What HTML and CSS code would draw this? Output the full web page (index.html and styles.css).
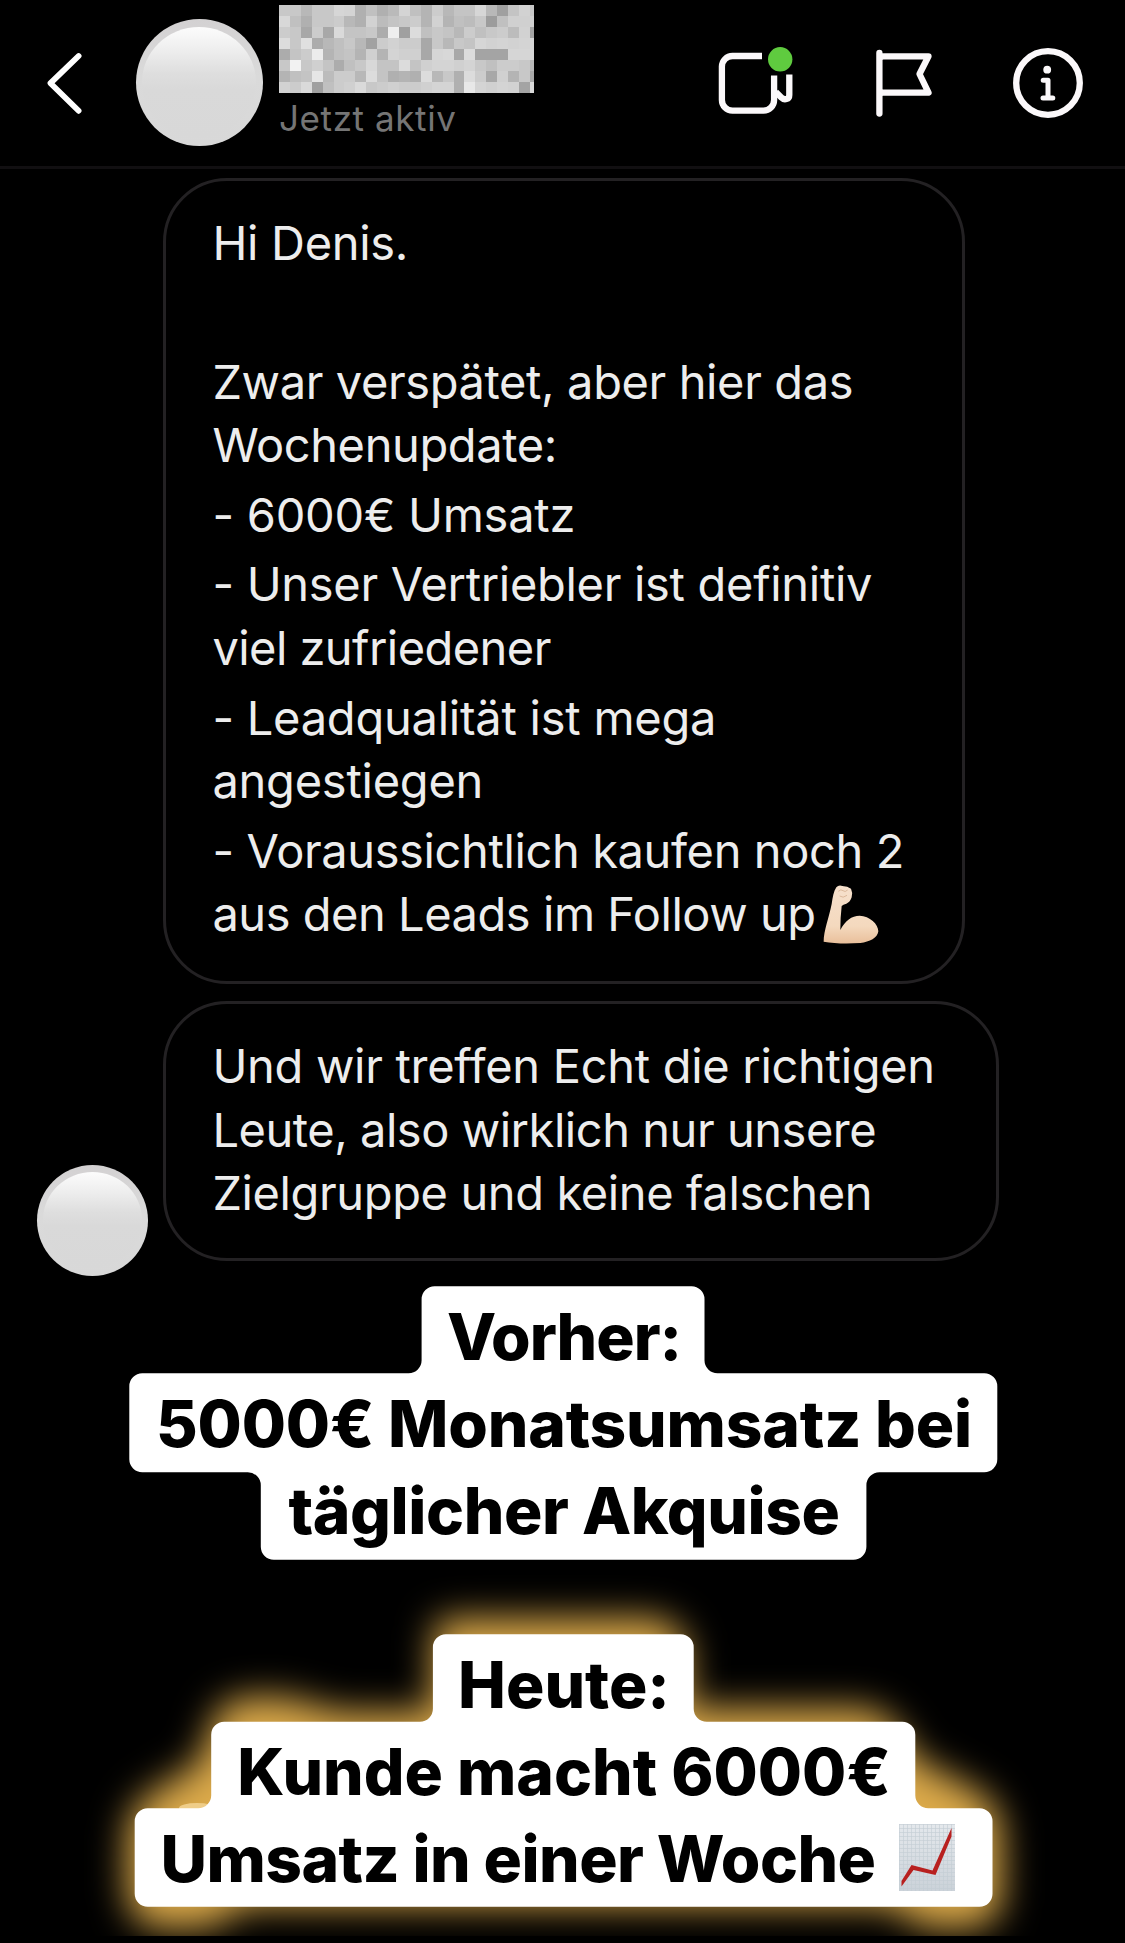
FILE: index.html
```html
<!DOCTYPE html>
<html lang="de">
<head>
<meta charset="utf-8">
<title>Chat</title>
<link rel="stylesheet" href="styles.css">
</head>
<body>
<header class="topbar">
  <svg class="back" viewBox="45 48 40 70" aria-hidden="true"><path d="M78.600 56 50.500 83.200l28.100 27.600"/></svg>
  <div class="avatar avatar-lg"></div>
  <div class="contact">
    <div class="mosaic" id="mosaic"></div>
    <div class="status">Jetzt aktiv</div>
  </div>
  <nav class="actions">
    <svg class="icon" width="90" height="80" viewBox="710 43 90 80" aria-hidden="true">
      <path d="M761 56H731.500a10.600 10.600 0 0 0-10.600 10.600V100a10.600 10.600 0 0 0 10.600 10.600H762.500A10.600 10.600 0 0 0 773.100 100V75.500"/>
      <path d="M788.300 74.500V95c0 4.500-5 5.500-8 2.500l-5.500-5.500"/>
      <circle class="online" cx="779.200" cy="59.300" r="12.200"/>
    </svg>
    <svg class="icon" width="70" height="80" viewBox="870 43 70 80" aria-hidden="true">
      <path class="round" d="M878.400 53V113.500M878.400 60q0-3.700 4-3.700H927.500L918.500 74 927.500 92.700H882q-3.600 0-3.600 4"/>
    </svg>
    <svg class="icon" width="74" height="80" viewBox="1010 43 74 80" aria-hidden="true">
      <circle cx="1047" cy="83" r="31.800"/>
      <circle class="solid" cx="1046.200" cy="69.700" r="3.900"/>
      <path class="stem" d="M1042.200 80.200H1047V98M1042 98h9.800"/>
    </svg>
  </nav>
</header>

<main class="thread">
  <article class="bubble bubble-update">
    <p><span class="l-hi">Hi Denis.</span></p>
    <p>&nbsp;</p>
    <p><span>Zwar verspätet, aber hier das</span><span>Wochenupdate:</span></p>
    <p><span class="l-sales">- 6000€ Umsatz</span></p>
    <p><span class="l-group">- Unser Vertriebler ist definitiv</span><span class="l-viel">viel zufriedener</span></p>
    <p><span class="l-sales">- Leadqualität ist mega</span><span class="l-sales">angestiegen</span></p>
    <p><span>- Voraussichtlich kaufen noch 2</span><span class="l-tight">aus den Leads im Follow up<svg class="arm" viewBox="66 40 168 180" role="img" aria-label="Bizeps">
      <defs><linearGradient id="skin" x1="0" y1="0" x2="0" y2="1"><stop offset="0" stop-color="#f6e0cc"/><stop offset=".7" stop-color="#f4d9be"/><stop offset="1" stop-color="#e9bf9b"/></linearGradient></defs>
      <path fill="url(#skin)" d="M68 213C68 180 84 140 92 100C95 80 98 62 106 50Q113 42 124 46Q140 46 150 54Q156 66 152 80Q148 94 136 99Q126 101 122 106Q118 140 118 178C132 150 152 135 176 135C206 136 232 160 232 182C230 202 206 214 178 217C140 219 100 219 68 213Z"/>
      <path fill="none" stroke="#dcb99c" stroke-width="3" d="M112 62q8-8 14-2t14-2M116 76q10 8 22-2"/>
    </svg></span></p>
  </article>
  <div class="row">
    <div class="avatar avatar-sm"></div>
    <article class="bubble bubble-group">
      <p><span class="l-group">Und wir treffen Echt die richtigen</span><span class="l-tight">Leute, also wirklich nur unsere</span><span>Zielgruppe und keine falschen</span></p>
    </article>
  </div>
</main>

<section class="label before">
  <svg class="plate" viewBox="0 1286 1125 274" aria-hidden="true">
    <path fill="#fff" d="M434.600 1286.300H691.500a13 13 0 0 1 13 13V1360.300a13 13 0 0 0 13 13H984.300a13 13 0 0 1 13 13V1459.300a13 13 0 0 1-13 13H879.400a13 13 0 0 0-13 13V1546.700a13 13 0 0 1-13 13H273.800a13 13 0 0 1-13-13V1485.300a13 13 0 0 0-13-13H142.300a13 13 0 0 1-13-13V1386.300a13 13 0 0 1 13-13H408.600a13 13 0 0 0 13-13V1299.300a13 13 0 0 1 13-13Z"/>
  </svg>
  <div class="lines">
    <span class="t-vorher">Vorher:</span>
    <span class="t-month">5000€ Monatsumsatz bei</span>
    <span class="t-daily">täglicher Akquise</span>
  </div>
</section>

<section class="label today">
  <svg class="plate" viewBox="0 1560 1125 376" aria-hidden="true">
    <defs><filter id="glow" filterUnits="userSpaceOnUse" x="0" y="1480" width="1125" height="540" color-interpolation-filters="sRGB"><feGaussianBlur stdDeviation="18"/></filter></defs>
    <path fill="#dcaa4a" filter="url(#glow)" d="M434 1634Q436 1620 450 1618H655Q680 1624 688 1650V1708H865Q895 1714 914 1758L975 1790Q1002 1804 1002 1840V1900Q996 1926 970 1928H925L890 1906H245L210 1928H155Q128 1920 127 1890V1835Q130 1804 156 1790L200 1762 212 1725Q220 1700 246 1697H285L340 1712H432Z"/>
    <ellipse cx="197" cy="1808" rx="18" ry="5" fill="#efcd88"/>
    <path fill="#fff" d="M445.900 1634.300H680.700a13 13 0 0 1 13 13V1708.700a13 13 0 0 0 13 13H902.300a13 13 0 0 1 13 13V1795.300a13 13 0 0 0 13 13H979.500a13 13 0 0 1 13 13V1893.700a13 13 0 0 1-13 13H147.700a13 13 0 0 1-13-13V1821.300a13 13 0 0 1 13-13H198.200a13 13 0 0 0 13-13V1734.700a13 13 0 0 1 13-13H419.900a13 13 0 0 0 13-13V1647.300a13 13 0 0 1 13-13Z"/>
  </svg>
  <div class="lines">
    <span>Heute:</span>
    <span>Kunde macht 6000€</span>
    <span class="t-week">Umsatz in einer Woche<svg class="chart" viewBox="0 0 56 67" role="img" aria-label="Steigende Kurve">
      <defs>
        <linearGradient id="paper" x1="0" y1="0" x2="0" y2="1"><stop offset="0" stop-color="#e4e8ec"/><stop offset="1" stop-color="#cbd2d9"/></linearGradient>
        <pattern id="grid" width="4" height="4" patternUnits="userSpaceOnUse"><path d="M0 .5H4M.5 0V4" stroke="#c3ccd4" stroke-width=".6"/></pattern>
      </defs>
      <path fill="url(#paper)" d="M0 0H56V67H0z"/><path fill="url(#grid)" d="M0 0H56V67H0z"/>
      <path fill="#b8201f" d="M2.500 57 12.500 41 33.500 46.500 52.500 4V12.500L36.500 51 14.500 46 2.500 62.500z"/>
    </svg></span>
  </div>
</section>
<script src="mosaic.js"></script>
</body>
</html>
```

FILE: styles.css
```css
* { box-sizing: border-box; }

body {
  margin: 0;
  width: 1125px;
  height: 1943px;
  overflow: hidden;
  background: #000;
  color: #ededed;
  font-family: Inter, "Liberation Sans", sans-serif;
}

p { margin: 0; }

.topbar {
  display: flex;
  align-items: center;
  height: 169px;
  padding: 0 40px 0 44.5px;
  border-bottom: 3px solid #110f11;
}

.back { width: 40px; height: 70px; margin-right: 51px; }
.back path {
  fill: none;
  stroke: #fff;
  stroke-width: 5.8;
  stroke-linecap: round;
  stroke-linejoin: round;
}

.avatar {
  display: flex;
  flex: none;
  border-radius: 50%;
  background: linear-gradient(#d3d1d2, #dadada 45%, #d8d8d8);
}
.avatar::before {
  content: "";
  flex: 1;
  margin: 6.5% 5%;
  border-radius: 50%;
  background: linear-gradient(#fcfcfc, #ededed 22%, #dedede 42%, #d9d9d9 56%, #d8d8d8);
}
.avatar-lg { width: 127px; height: 127px; margin-bottom: 1px; }
.avatar-sm { width: 111px; height: 111px; }

.contact { align-self: flex-start; margin: 5px 0 0 16.5px; }
.mosaic {
  display: grid;
  grid-template-columns: repeat(24, 10.92px);
  grid-auto-rows: 10.94px;
  width: 255px;
  height: 87.5px;
  overflow: hidden;
}
.status {
  margin-top: 5px;
  color: #757575;
  font-size: 35px;
  line-height: 40px;
  letter-spacing: .6px;
}

.actions { display: flex; gap: 70px; margin-left: auto; }
.icon {
  fill: none;
  stroke: #fbf8fa;
  stroke-width: 6.3;
  stroke-linejoin: round;
}
.round { stroke-linecap: round; }
.stem { stroke-width: 5; stroke-linecap: round; }
.solid { fill: #fbf8fa; stroke: none; }
.online { fill: #5fcb3f; stroke: none; }

.thread { padding: 8.5px 0 0 37px; }
.bubble {
  border: 3px solid #232123;
  border-radius: 64px;
  padding: 30px 46px 0;
  font-size: 47px;
  line-height: 63.6px;
  letter-spacing: -.38px;
  white-space: nowrap;
}
.bubble p + p { margin-top: 6px; }
.bubble span { display: block; }
.bubble-update { width: 802px; height: 806px; margin-left: 126.400px; }
.bubble-group { width: 836px; height: 260px; margin-bottom: 14.7px; }
.row { display: flex; align-items: flex-end; gap: 15.400px; margin-top: 17.5px; }

.bubble .l-hi { letter-spacing: -.3px; }
.bubble .l-sales { letter-spacing: -.24px; }
.bubble .l-viel { letter-spacing: -.55px; }
.bubble .l-tight { letter-spacing: -.46px; }
.bubble .l-group { letter-spacing: -.3px; }
.arm { width: 56px; height: 60px; margin-left: 7.5px; vertical-align: -12.5px; }

.label { display: grid; }
.label > * { grid-area: 1 / 1; }
.plate { display: block; width: 1125px; }
.before { height: 274px; margin-top: 10.3px; }
.today { height: 376px; overflow: hidden; }
.lines {
  display: flex;
  flex-direction: column;
  align-items: center;
  padding: 7px 0 0 3px;
  color: #000;
  font-size: 64px;
  font-weight: 800;
  line-height: 87px;
  white-space: nowrap;
  z-index: 1;
}
.today .lines { padding-top: 81px; }
.t-vorher { letter-spacing: -1px; }
.t-month { letter-spacing: -.15px; }
.t-daily { letter-spacing: -.42px; }
.t-week { display: flex; letter-spacing: -.56px; }
.chart { width: 56px; height: 67px; margin: 9px 12px 0 24px; }
```

FILE: mosaic.js
```
// One grey level (hex byte) per tile, row by row.
const rows = [
  'c8c8b8c8c8d6d4b0c0b0bad4c0b4ccb8c4c4d6b8a0c4d2c8',
  'd8c0b0c8c8ccb8b0d2bcc4c8ccb4d2b4c0bcc89cc0d0d0d0',
  'ccc8a8cca8dac4c4c8aceea0dcc0c8c4b8ccc0c8ccbcd2a4',
  'dcc8e0acb8c0c8b8a2ccd2cccca8c8b8c8c4d6d2d4d2d4d6',
  'acc4ccecb4c0c4b4d0b4d4d0d0a8d6d8a8dca4a4a4d6d6d6',
  'c8f2c8d0c4acc0c8d8c4c4dcc4d0d4d4d0d4c8c0ccccc8b8',
  'b4c0c4e6bcccccb8dcc4b0b4b0dcb8c8b0dccca8d0b4c8a8',
  'd2ccdaa0c0ccd0dac8ccd0ccccd0d4d4b0e8d4d0d4d2a4d8'
];
const mosaic = document.getElementById('mosaic');
for (const level of rows.join('').match(/../g)) {
  const tile = document.createElement('i');
  tile.style.background = '#' + level.repeat(3);
  mosaic.append(tile);
}
```
